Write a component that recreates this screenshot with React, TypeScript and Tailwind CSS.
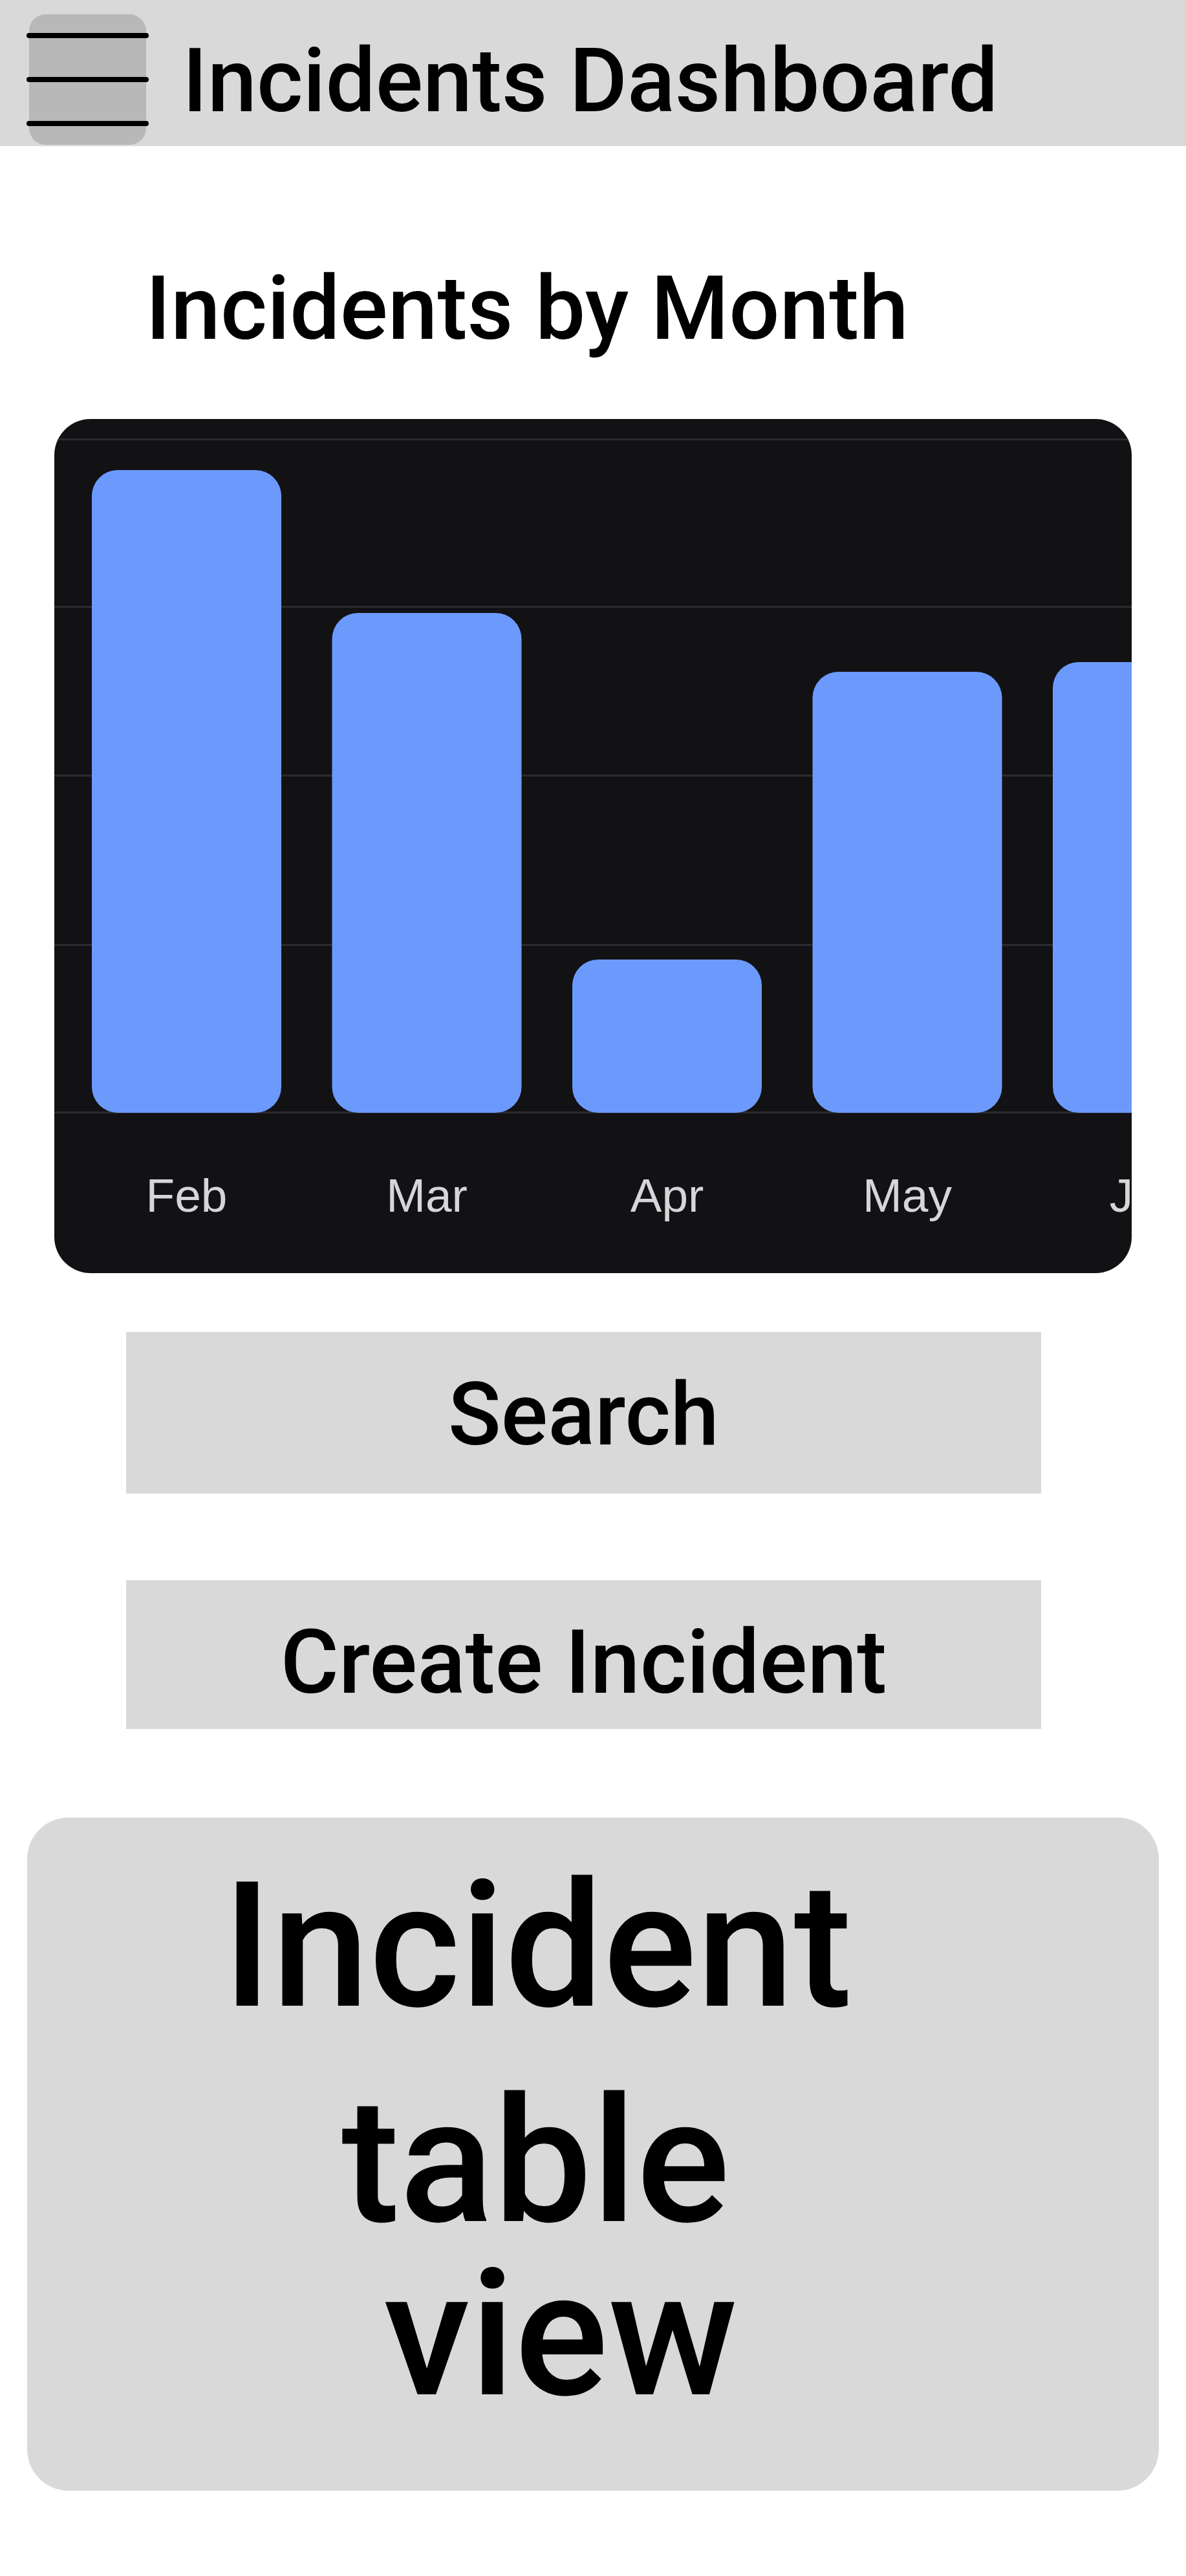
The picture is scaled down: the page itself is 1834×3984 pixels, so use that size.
import React from 'react';

const months = [
  { name: 'Feb', top: 79 },
  { name: 'Mar', top: 300 },
  { name: 'Apr', top: 836 },
  { name: 'May', top: 391 },
  { name: 'Jun', top: 376 },
];

const gridLines = [30, 289, 550, 812, 1071];

function MenuButton() {
  return (
    <button className="ml-[45px] mt-[22px] flex h-[202px] w-[181px] shrink-0 flex-col gap-[60px] rounded-[26px] bg-[#b8b8b8] pt-[29px]">
      <span className="-ml-[4px] block h-[8px] w-[189px] rounded-full bg-black" />
      <span className="-ml-[4px] block h-[8px] w-[189px] rounded-full bg-black" />
      <span className="-ml-[4px] block h-[8px] w-[189px] rounded-full bg-black" />
    </button>
  );
}

function MonthChart() {
  const barW = 293;
  const pitch = 371.5;
  const baseY = 1073;

  return (
    <div className="ml-[84px] mt-[102px] h-[1321px] w-[1666px] overflow-hidden rounded-[56px] bg-[#121214]">
      <svg width={1666} height={1076} viewBox="0 0 1666 1076" className="block">
        {gridLines.map((y) => (
          <rect key={y} x={0} y={y} width={1666} height={3} fill="#2b2b2f" />
        ))}
        {months.map((m, i) => (
          <rect
            key={m.name}
            x={58 + i * pitch}
            y={m.top}
            width={barW}
            height={baseY - m.top}
            rx={40}
            fill="#6c9afc"
          />
        ))}
      </svg>
      <div className="mt-[88px] flex gap-[78.5px] pl-[58px]">
        {months.map((m) => (
          <div
            key={m.name}
            className="w-[293px] shrink-0 text-center font-['Liberation_Sans',Arial,sans-serif] text-[73px] leading-none text-[#d6d6d8]"
          >
            {m.name}
          </div>
        ))}
      </div>
    </div>
  );
}

export default function App() {
  return (
    <div className="min-h-[3984px] w-[1834px] bg-white font-['Roboto',sans-serif] text-black">
      <header className="flex h-[226px] items-start bg-[#d9d9d9]">
        <MenuButton />
        <h1 className="ml-[56px] mt-[57px] text-[137px] font-medium leading-none">Incidents Dashboard</h1>
      </header>

      <h2 className="ml-[225px] mt-[182px] text-[138px] font-medium leading-none">Incidents by Month</h2>

      <MonthChart />

      <div className="ml-[195px] mt-[91px] flex w-[1415px] flex-col gap-[134px]">
        <button className="flex h-[250px] items-center justify-center bg-[#d9d9d9] pt-[6px] text-[135px] font-medium leading-none">
          Search
        </button>
        <button className="flex h-[230px] items-center justify-center bg-[#d9d9d9] pt-[24px] text-[138px] font-medium leading-none">
          Create Incident
        </button>
      </div>

      <div className="ml-[42px] mt-[137px] h-[1041px] w-[1750px] rounded-[64px] bg-[#d9d9d9] pt-[64px] text-[270px] font-medium leading-none">
        <div className="ml-[302px]">Incident</div>
        <div className="ml-[486px] mt-[63px]">table</div>
        <div className="ml-[551px] mt-[-2px]">view</div>
      </div>
    </div>
  );
}
